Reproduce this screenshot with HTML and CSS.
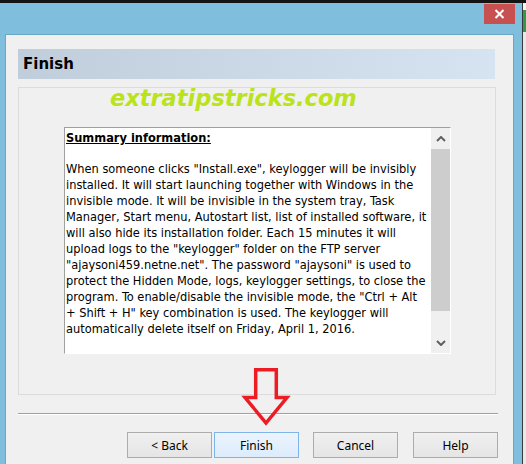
FILE: index.html
```html
<!DOCTYPE html>
<html>
<head>
<meta charset="utf-8">
<link rel="stylesheet" href="styles.css">
</head>
<body>
<div class="screen">
  <div class="topstrip"></div>
  <div class="main">
    <div class="window">
      <div class="titlebar">
        <div class="close">
          <svg width="11" height="10" viewBox="0 0 11 10"><path d="M1.5 1 L9.5 9 M9.5 1 L1.5 9" stroke="#fff" stroke-width="2" fill="none"/></svg>
        </div>
      </div>
      <div class="client">
        <div class="header">Finish</div>
        <div class="panel">
          <div class="watermark">extratipstricks.com</div>
          <div class="memo">
            <div class="memo-text">
              <div class="memo-title">Summary information:</div>
              <div class="memo-gap"></div>
              <div class="memo-line">When someone clicks "Install.exe", keylogger will be invisibly</div>
              <div class="memo-line">installed. It will start launching together with Windows in the</div>
              <div class="memo-line">invisible mode. It will be invisible in the system tray, Task</div>
              <div class="memo-line">Manager, Start menu, Autostart list, list of installed software, it</div>
              <div class="memo-line">will also hide its installation folder. Each 15 minutes it will</div>
              <div class="memo-line">upload logs to the "keylogger" folder on the FTP server</div>
              <div class="memo-line">"ajaysoni459.netne.net". The password "ajaysoni" is used to</div>
              <div class="memo-line">protect the Hidden Mode, logs, keylogger settings, to close the</div>
              <div class="memo-line">program. To enable/disable the invisible mode, the "Ctrl + Alt</div>
              <div class="memo-line">+ Shift + H" key combination is used. The keylogger will</div>
              <div class="memo-line">automatically delete itself on Friday, April 1, 2016.</div>
            </div>
            <div class="scrollbar">
              <div class="sb-btn">
                <svg width="10" height="6" viewBox="0 0 10 6"><path d="M1 5 L5 1 L9 5" stroke="#606060" stroke-width="2" fill="none"/></svg>
              </div>
              <div class="sb-thumb"></div>
              <div class="sb-rest"></div>
              <div class="sb-btn">
                <svg width="10" height="6" viewBox="0 0 10 6"><path d="M1 1 L5 5 L9 1" stroke="#606060" stroke-width="2" fill="none"/></svg>
              </div>
            </div>
          </div>
        </div>
        <div class="sep"></div>
        <div class="buttons">
          <div class="btn">&lt; Back</div>
          <div class="btn btn-default">Finish</div>
          <div class="btn btn-cancel">Cancel</div>
          <div class="btn btn-help">Help</div>
        </div>
      </div>
    </div>
    <div class="rightedge">
      <div class="re-top"></div>
      <div class="re-green"></div>
      <div class="re-rest"></div>
    </div>
  </div>
  <svg class="arrow" width="52" height="64" viewBox="0 0 52 64">
    <polygon points="15.7,4.7 36.3,4.7 36.3,32.5 47,32.5 26,58 5,32.5 15.7,32.5" fill="none" stroke="#ed1c24" stroke-width="3.5" stroke-linejoin="miter"/>
  </svg>
</div>
</body>
</html>
```
FILE: styles.css
```css
html, body {
  margin: 0;
  padding: 0;
  width: 526px;
  height: 464px;
  overflow: hidden;
  background: #7fbfdd;
}
.screen {
  position: relative;
  width: 526px;
  height: 464px;
  overflow: hidden;
  display: flex;
  flex-direction: column;
}
.topstrip {
  height: 3px;
  background: #141414;
  flex: none;
}
.main {
  display: flex;
  flex: 1;
  min-height: 0;
}
.window {
  width: 522px;
  background: #7fbfdd;
  display: flex;
  flex-direction: column;
  flex: none;
}
.titlebar {
  height: 31px;
  display: flex;
  justify-content: flex-end;
  align-items: flex-start;
  padding-top: 1px;
  box-sizing: border-box;
  padding-right: 7px;
  flex: none;
}
.close {
  width: 31px;
  height: 20px;
  background: #c75050;
  display: flex;
  align-items: center;
  justify-content: center;
}
.close svg { display: block; }
.client {
  margin-left: 5px;
  width: 509px;
  flex: 1;
  background: #f0f0f0;
  border: 1px solid #6aa7c6;
  border-bottom: none;
  box-sizing: border-box;
  display: flex;
  flex-direction: column;
}
.header {
  margin: 14px 0 0 12px;
  width: 477px;
  height: 30px;
  box-sizing: border-box;
  background: linear-gradient(to right, #c0cedb, #d6e3f0);
  font: bold 15px "DejaVu Sans", sans-serif;
  color: #000;
  line-height: 30px;
  padding-left: 5px;
}
.panel {
  position: relative;
  margin: 8px 0 0 12px;
  width: 478px;
  height: 308px;
  box-sizing: border-box;
  border: 1px solid #dcdcdc;
}
.watermark {
  position: absolute;
  left: 91px;
  top: -3px;
  font: bold oblique 22.5px "DejaVu Sans", sans-serif;
  line-height: 26px;
  color: #bae31b;
  white-space: nowrap;
}
.memo {
  margin: 39px 0 0 45px;
  width: 387px;
  height: 227px;
  box-sizing: border-box;
  border-style: solid;
  border-width: 1px;
  border-color: #a0a0a0 #ffffff #ffffff #a0a0a0;
  background: #fff;
  display: flex;
}
.memo-text {
  flex: 1;
  padding: 2px 0 0 1px;
  font: 12.7px "DejaVu Sans Condensed", "DejaVu Sans", sans-serif;
  line-height: 16px;
  color: #000;
  white-space: nowrap;
  overflow: hidden;
}
.memo-title {
  font-weight: bold;
  text-decoration: underline;
  height: 16px;
}
.memo-gap { height: 15px; }
.memo-line { height: 16px; }
.scrollbar {
  width: 19px;
  flex: none;
  background: #f0f0f0;
  display: flex;
  flex-direction: column;
}
.sb-btn {
  height: 21px;
  display: flex;
  align-items: center;
  justify-content: center;
  flex: none;
}
.sb-btn svg { display: block; }
.sb-thumb {
  height: 162px;
  background: #cdcdcd;
  flex: none;
}
.sb-rest { flex: 1; }
.sep {
  margin: 18px 0 0 12px;
  width: 480px;
  height: 1px;
  background: #a0a0a0;
  border-bottom: 1px solid #ffffff;
  flex: none;
}
.buttons {
  margin: 17px 0 0 121px;
  display: flex;
}
.btn {
  width: 85px;
  height: 26px;
  box-sizing: border-box;
  border: 1px solid #acacac;
  background: linear-gradient(#f0f0f0, #e5e5e5);
  font: 12px "Noto Sans", sans-serif;
  color: #000;
  display: flex;
  align-items: center;
  justify-content: center;
}
.btn-default {
  margin-left: 2px;
  border-color: #7eb4ea;
  background: linear-gradient(#ecf4fc, #dcecfc);
}
.btn-cancel { margin-left: 14px; }
.btn-help { margin-left: 15px; }
.rightedge {
  width: 4px;
  flex: none;
  border-left: 1px solid #3a3a3a;
  box-sizing: border-box;
  display: flex;
  flex-direction: column;
  background: #e8e8e8;
}
.re-top { height: 7px; background: #f4f4f4; }
.re-green { height: 22px; background: #2f9a4a; }
.re-rest { flex: 1; background: #e8e8e8; }
.arrow {
  position: absolute;
  left: 240px;
  top: 365px;
}
```
